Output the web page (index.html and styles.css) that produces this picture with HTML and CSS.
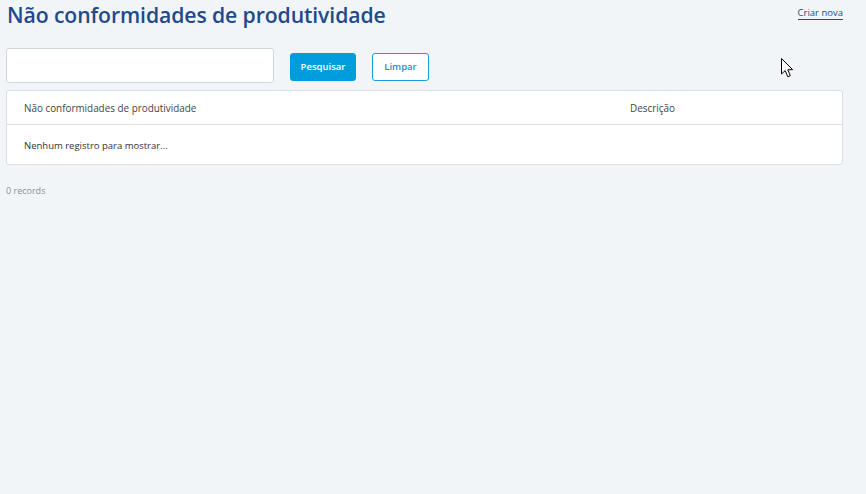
FILE: index.html
```html
<!DOCTYPE html>
<html lang="pt">
<head>
<meta charset="utf-8">
<title>Não conformidades de produtividade</title>
<link rel="stylesheet" href="styles.css">
</head>
<body>
<div class="page">
  <header class="topbar">
    <h1 class="title">Não conformidades de produtividade</h1>
    <a class="create-link" href="#">Criar nova</a>
  </header>
  <div class="search-row">
    <input class="search-input" type="text">
    <button class="btn btn-primary">Pesquisar</button>
    <button class="btn btn-outline">Limpar</button>
  </div>
  <div class="table-card">
    <div class="table-head">
      <div class="col-name">Não conformidades de produtividade</div>
      <div class="col-desc">Descrição</div>
    </div>
    <div class="table-empty">Nenhum registro para mostrar…</div>
  </div>
  <div class="records">0 records</div>
</div>
<svg class="cursor" width="13" height="21" viewBox="0 0 13 21">
  <path d="M0.5 0.5 L0.5 16 L4.2 12.6 L6.8 18.8 L9.3 17.7 L6.8 11.8 L11.6 11.6 Z" fill="#fff" stroke="#000" stroke-width="1" stroke-linejoin="miter"/>
</svg>
</body>
</html>
```
FILE: styles.css
```css
html, body {
  margin: 0;
  padding: 0;
  background: #f2f5f7;
  font-family: "Open Sans", "Noto Sans", sans-serif;
  color: #333;
}
.page {
  padding: 0 23px 0 6px;
}
.topbar {
  display: flex;
  justify-content: space-between;
  align-items: flex-start;
  height: 42px;
}
.title {
  margin: 0;
  padding: 1px 0 0 1px;
  font-size: 21.2px;
  font-weight: 600;
  line-height: 28px;
  color: #1f4a8c;
  letter-spacing: -0.1px;
}
.create-link {
  margin-top: 6px;
  font-size: 9.5px;
  color: #2b4a7a;
  text-decoration: none;
  border-bottom: 1px solid #1f4a8c;
  line-height: 13px;
}
.search-row {
  display: flex;
  align-items: center;
  height: 35px;
  margin-top: 6px;
}
.search-input {
  box-sizing: border-box;
  width: 268px;
  height: 35px;
  margin: 0;
  border: 1px solid #cfd6dc;
  border-radius: 3px;
  background: #fff;
  outline: none;
}
.btn {
  box-sizing: border-box;
  height: 28px;
  padding: 0;
  border-radius: 3px;
  font-family: inherit;
  font-size: 9.5px;
  font-weight: 600;
  cursor: pointer;
}
.btn-primary {
  width: 66px;
  margin-left: 16px;
  margin-top: 2px;
  background: #009ddc;
  border: 1px solid #009ddc;
  color: #fff;
}
.btn-outline {
  width: 57px;
  margin-left: 16px;
  margin-top: 2px;
  background: #fff;
  border: 1px solid #1a9fdc;
  color: #1a8fcc;
}
.table-card {
  margin-top: 7px;
  background: #fff;
  border: 1px solid #d9dfe4;
  border-radius: 3px;
}
.table-head {
  display: flex;
  padding-top: 1px;
  box-sizing: border-box;
  height: 34px;
  align-items: center;
  border-bottom: 1px solid #d9dfe4;
  font-size: 9.9px;
  color: #444;
}
.col-name {
  padding-left: 17px;
  width: 606px;
}
.col-desc {
  flex: 1;
}
.table-empty {
  height: 39px;
  display: flex;
  align-items: center;
  padding: 1px 0 0 17px;
  box-sizing: border-box;
  font-size: 9.5px;
  color: #333;
}
.records {
  margin-top: 19px;
  font-size: 9px;
  color: #8a8f99;
}
.cursor {
  position: absolute;
  left: 781px;
  top: 58px;
}
```
